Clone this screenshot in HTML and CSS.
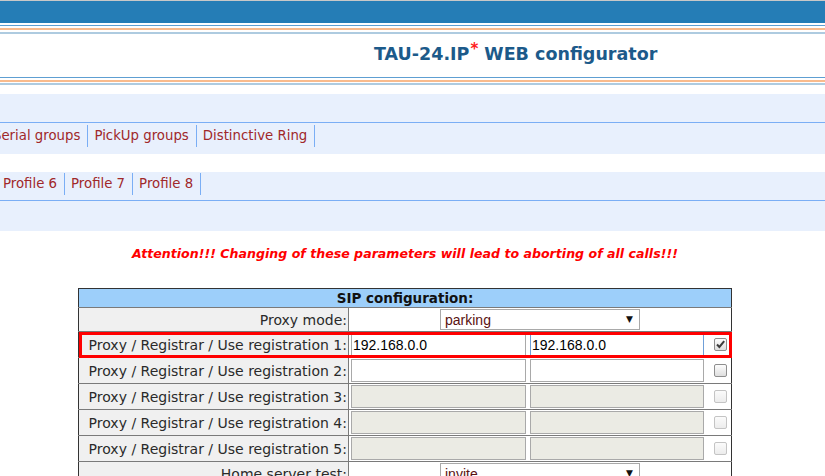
FILE: index.html
```html
<!DOCTYPE html>
<html>
<head>
<meta charset="utf-8">
<link rel="stylesheet" href="styles.css">
</head>
<body>
<div class="edge"></div>
<div class="band"></div>
<div class="stripes stripes-top">
  <div class="ln ln-blue"></div>
  <div class="ln ln-orange"></div>
  <div class="ln ln-pale"></div>
</div>
<div class="title-area">
  <h1 class="title">TAU-24.IP<sup class="star">*</sup> WEB configurator</h1>
</div>
<div class="stripes stripes-bottom">
  <div class="ln ln-blue"></div>
  <div class="ln ln-orange"></div>
  <div class="ln ln-pale"></div>
</div>

<div class="nav nav-one">
  <div class="bar bar-empty1"></div>
  <div class="menu menu-one">
    <a class="item item-lead1">Serial groups</a>
    <a class="item">PickUp groups</a>
    <a class="item">Distinctive Ring</a>
  </div>
</div>

<div class="nav nav-two">
  <div class="menu menu-two">
    <a class="item item-lead2">Profile 6</a>
    <a class="item">Profile 7</a>
    <a class="item">Profile 8</a>
  </div>
  <div class="bar bar-empty2"></div>
</div>

<p class="attention">Attention!!! Changing of these parameters will lead to aborting of all calls!!!</p>

<table class="sip">
  <colgroup><col class="c-lbl"><col class="c-val"></colgroup>
  <tr class="head"><td colspan="2">SIP configuration:</td></tr>
  <tr class="row-sel">
    <td class="lbl">Proxy mode:</td>
    <td class="val center"><span class="selwrap"><select class="sel"><option>parking</option></select><span class="arrow">▼</span></span></td>
  </tr>
  <tr class="row-in hl">
    <td class="lbl">Proxy / Registrar / Use registration 1:</td>
    <td class="val"><div class="fields"><input class="in in1" value="192.168.0.0"><input class="in in2 focus" value="192.168.0.0"><span class="cb checked"><svg width="11" height="11" viewBox="0 0 11 11"><path d="M2 5.5 L4.4 8 L9.2 2.2" fill="none" stroke="#3c3c3c" stroke-width="2"/></svg></span></div></td>
  </tr>
  <tr class="row-in">
    <td class="lbl">Proxy / Registrar / Use registration 2:</td>
    <td class="val"><div class="fields"><input class="in in1" value=""><input class="in in2" value=""><span class="cb"></span></div></td>
  </tr>
  <tr class="row-in">
    <td class="lbl">Proxy / Registrar / Use registration 3:</td>
    <td class="val"><div class="fields"><input class="in in1" disabled><input class="in in2" disabled><span class="cb off"></span></div></td>
  </tr>
  <tr class="row-in">
    <td class="lbl">Proxy / Registrar / Use registration 4:</td>
    <td class="val"><div class="fields"><input class="in in1" disabled><input class="in in2" disabled><span class="cb off"></span></div></td>
  </tr>
  <tr class="row-in">
    <td class="lbl">Proxy / Registrar / Use registration 5:</td>
    <td class="val"><div class="fields"><input class="in in1" disabled><input class="in in2" disabled><span class="cb off"></span></div></td>
  </tr>
  <tr class="row-sel">
    <td class="lbl">Home server test:</td>
    <td class="val center"><span class="selwrap"><select class="sel"><option>invite</option></select><span class="arrow">▼</span></span></td>
  </tr>
</table>
</body>
</html>
```

FILE: styles.css
```css
html, body {
  margin: 0;
  padding: 0;
  background: #ffffff;
  overflow: hidden;
  font-family: "DejaVu Sans", Verdana, sans-serif;
  font-size: 13px;
}

.edge { height: 1px; background: #c8c8c8; }
.band { height: 22px; background: #257db6; }

.stripes { display: flex; flex-direction: column; }
.stripes-top { padding-top: 2px; }
.ln-blue { height: 1px; background: #5e9fd2; }
.ln-orange { height: 2px; background: #f9bb8d; margin-top: 2px; }
.ln-pale { height: 2px; background: #aecbe0; margin-top: 2px; }
.stripes-bottom { padding-top: 0; margin-bottom: 9px; }
.stripes-bottom .ln-orange { margin-top: 2px; }
.stripes-bottom .ln-pale { margin-top: 1px; }

.title-area {
  height: 43px;
  display: flex;
  align-items: center;
  padding-left: 374px;
  box-sizing: border-box;
  padding-bottom: 4px;
}
.title {
  margin: 0;
  font-size: 17.5px;
  font-weight: bold;
  color: #1c5a8a;
  white-space: nowrap;
  line-height: 22px;
}
.star {
  color: #ff2020;
  font-size: 15px;
  vertical-align: 6px;
  line-height: 0;
  margin-left: 1px;
}

.nav { background: #e8f0fd; }
.bar-empty1 { height: 28px; border-bottom: 1px solid #7aaef5; }
.menu { display: flex; white-space: nowrap; }
.menu-one { height: 31px; align-items: flex-start; padding-top: 2px; box-sizing: border-box; }
.menu-two { padding-top: 1px; box-sizing: border-box; border-bottom: 1px solid #7aaef5; height: 29px; }
.bar-empty2 { height: 30px; }
.nav-two { margin-top: 18px; }

.item {
  display: block;
  height: 22px;
  line-height: 22px;
  font-size: 13.3px;
  padding: 0 7px 0 6px;
  border-right: 1px solid #7aaef5;
  color: #a0282a;
  cursor: pointer;
}
.item-lead1 { margin-left: -13px; }
.item-lead2 { margin-left: -3px; }

.attention {
  margin: 15px 0 26px;
  text-align: center;
  color: #ff0000;
  font-weight: bold;
  font-style: italic;
  font-size: 12.6px;
  line-height: 16px;
  padding-right: 15px;
}

.sip {
  border-collapse: collapse;
  margin-left: 78px;
  width: 653px;
  table-layout: fixed;
}
.c-lbl { width: 270px; }
.c-val { width: 383px; }
.sip td {
  border: 1px solid #7a7a7a;
  padding: 0;
}
.sip td:first-child { border-left-color: #333; }
.sip td:last-child { border-right-color: #333; }
.sip .head td {
  background: #9dcffa;
  text-align: center;
  font-weight: bold;
  font-size: 13.5px;
  color: #111;
  height: 18px;
  line-height: 18px;
  border-top-color: #333;
}
.lbl {
  background: #f0f0f0;
  text-align: right;
  color: #2a2a2a;
  font-size: 14px;
  padding-right: 1px !important;
  white-space: nowrap;
}
.val { background: #ffffff; }
.center { text-align: center; }
.row-sel td { height: 23px; }
.row-in td { height: 25px; }

.hl { outline: 3px solid #ff0000; outline-offset: -3px; }

.selwrap {
  position: relative;
  display: inline-block;
  vertical-align: middle;
  width: 200px;
  height: 21px;
}
.sel {
  appearance: none;
  -webkit-appearance: none;
  width: 200px;
  height: 21px;
  box-sizing: border-box;
  border: 1px solid #a9a9a9;
  border-radius: 0;
  background: #fff;
  font-family: "Liberation Sans", Arial, sans-serif;
  font-size: 14px;
  color: #5a1212;
  padding: 0 0 0 4px;
  margin: 0;
  display: block;
}
.arrow {
  position: absolute;
  right: 7px;
  top: 5px;
  font-size: 9px;
  line-height: 10px;
  color: #111;
  pointer-events: none;
}

.fields {
  display: flex;
  align-items: center;
  padding-left: 2px;
}
.in {
  box-sizing: border-box;
  height: 23px;
  border: 1px solid #a9a9a9;
  background: #fff;
  font-family: "Liberation Sans", Arial, sans-serif;
  font-size: 14px;
  color: #000;
  padding: 0 0 0 1px;
  margin: 0;
  outline: none;
}
.in1 { width: 175px; margin-right: 4px; }
.in2 { width: 174px; }
.in.focus { border-left-color: #6f9fd8; border-right-color: #6f9fd8; }
.in:disabled { background: #ebebe4; border-color: #a9a9a9; }

.cb {
  box-sizing: border-box;
  width: 13px;
  height: 13px;
  margin-left: 10px;
  border: 1px solid #8e8e8e;
  border-radius: 2px;
  background: linear-gradient(#fdfdfd, #dedede);
  display: flex;
  align-items: center;
  justify-content: center;
}
.cb svg { display: block; }
.cb.off {
  border-color: #c4c4c4;
  background: linear-gradient(#fbfbfb, #ececec);
}
```
